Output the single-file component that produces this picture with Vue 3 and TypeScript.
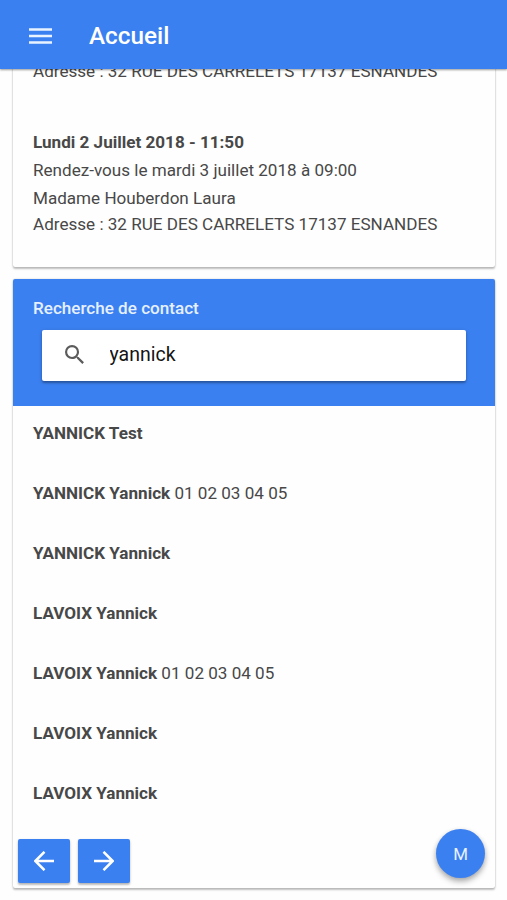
<script setup lang="ts">
interface Appointment {
  date?: string
  summary?: string
  person?: string
  address: string
}

interface Contact {
  name: string
  phone?: string
}

const appointments: Appointment[] = [
  { address: '32 RUE DES CARRELETS 17137 ESNANDES' },
  {
    date: 'Lundi 2 Juillet 2018 - 11:50',
    summary: 'Rendez-vous le mardi 3 juillet 2018 à 09:00',
    person: 'Madame Houberdon Laura',
    address: '32 RUE DES CARRELETS 17137 ESNANDES',
  },
]

const contacts: Contact[] = [
  { name: 'YANNICK Test' },
  { name: 'YANNICK Yannick', phone: '01 02 03 04 05' },
  { name: 'YANNICK Yannick' },
  { name: 'LAVOIX Yannick' },
  { name: 'LAVOIX Yannick', phone: '01 02 03 04 05' },
  { name: 'LAVOIX Yannick' },
  { name: 'LAVOIX Yannick' },
]
</script>

<template>
  <div class="page">
    <header class="toolbar">
      <svg class="menu" viewBox="0 0 23 16" aria-hidden="true">
        <path d="M0 1.4h23M0 8h23M0 14.6h23" />
      </svg>
      <h1>Accueil</h1>
    </header>

    <main class="content">
      <section class="card appointments">
        <article v-for="(item, index) in appointments" :key="index" class="appointment">
          <h2 v-if="item.date">{{ item.date }}</h2>
          <p v-if="item.summary">{{ item.summary }}</p>
          <p v-if="item.person">{{ item.person }}</p>
          <p class="address">Adresse : {{ item.address }}</p>
        </article>
      </section>

      <section class="card contacts">
        <div class="search-panel">
          <h2>Recherche de contact</h2>
          <label class="search">
            <svg viewBox="0 0 18 18" aria-hidden="true">
              <path d="M12.5 11h-.79l-.28-.27A6.47 6.47 0 0 0 13 6.5 6.5 6.5 0 1 0 6.5 13c1.61 0 3.09-.59 4.23-1.57l.27.28v.79l5 4.99L17.49 16l-4.99-5zm-6 0a4.5 4.5 0 1 1 0-9 4.5 4.5 0 0 1 0 9z" />
            </svg>
            <input type="text" value="yannick" />
          </label>
        </div>
        <ul>
          <li v-for="(contact, index) in contacts" :key="index">
            <strong>{{ contact.name }}</strong>{{ contact.phone ? ' ' + contact.phone : '' }}
          </li>
        </ul>
        <div class="pager">
          <button type="button" aria-label="Précédent">
            <svg viewBox="0 0 20 20"><path d="M20 10H1.5M10.5 .8L1.3 10l9.2 9.2" /></svg>
          </button>
          <button type="button" aria-label="Suivant">
            <svg viewBox="0 0 20 20"><path d="M0 10h18.5M9.5 .8l9.2 9.2-9.2 9.2" /></svg>
          </button>
        </div>
      </section>
    </main>

    <button class="fab" type="button">M</button>
  </div>
</template>

<style>
body {
  margin: 0;
  background: #fefefe;
}
</style>

<style scoped>
.page {
  position: relative;
  box-sizing: border-box;
  display: flex;
  flex-direction: column;
  height: 900px;
  overflow: hidden;
  font-family: Roboto, "Liberation Sans", sans-serif;
  font-size: 17.08px;
  color: #484848;
}

.toolbar {
  position: relative;
  z-index: 1;
  flex: none;
  display: flex;
  align-items: center;
  gap: 37px;
  box-sizing: border-box;
  height: 69px;
  padding: 3px 29px 0;
  background: #3b80f0;
  color: #fff;
  box-shadow: 0 1px 2px rgba(0, 0, 0, 0.4);
}

.menu {
  width: 23px;
  height: 16px;
  fill: none;
  stroke: #e9f2ff;
  stroke-width: 2.5;
}

h1 {
  margin: 0;
  font-size: 24.3px;
  font-weight: 500;
  line-height: 28px;
}

.content {
  flex: 1;
  min-height: 0;
  display: flex;
  flex-direction: column;
  justify-content: flex-end;
  gap: 12px;
  padding: 0 12px 12px 13px;
}

.card {
  flex: none;
  border-radius: 2px;
  background: #fefefe;
  box-shadow: 0 2px 2px rgba(0, 0, 0, 0.24), 0 0 2px rgba(0, 0, 0, 0.2);
}

.appointments {
  padding: 0 20px 30px;
}

.appointment + .appointment {
  margin-top: 44px;
}

.appointment h2,
.appointment p {
  margin: 0;
  font-size: inherit;
  line-height: 28px;
  white-space: nowrap;
}

.appointment h2 {
  font-weight: 700;
}

.appointment .address {
  line-height: 25px;
}

.search-panel {
  box-sizing: border-box;
  height: 127px;
  padding: 19px 29px 0;
  border-radius: 2px 2px 0 0;
  background: #3b80f0;
}

.search-panel h2 {
  margin: 0 0 11.5px -9px;
  font-size: 17.08px;
  font-weight: 500;
  line-height: 20px;
  color: #e6f0ff;
}

.search {
  display: flex;
  align-items: center;
  gap: 25.5px;
  box-sizing: border-box;
  height: 51px;
  padding: 0 22.5px;
  border-radius: 2px;
  background: #fff;
  box-shadow: 0 2px 2px rgba(0, 0, 0, 0.26), 0 1px 4px rgba(0, 0, 0, 0.16);
}

.search svg {
  flex: none;
  width: 19.5px;
  height: 19.5px;
  fill: #5b5b5b;
}

.search input {
  flex: 1;
  min-width: 0;
  padding: 0;
  border: 0;
  outline: 0;
  background: transparent;
  font: 400 19.5px/26px Roboto, "Liberation Sans", sans-serif;
  color: #141414;
}

ul {
  margin: 0;
  padding: 0 20px;
  list-style: none;
}

li {
  height: 60px;
  line-height: 55px;
  white-space: nowrap;
}

.pager {
  display: flex;
  gap: 8px;
  padding: 13px 5px 5px;
}

.pager button {
  display: flex;
  align-items: center;
  justify-content: center;
  width: 52px;
  height: 44px;
  padding: 0;
  border: 0;
  border-radius: 2px;
  background: #3b80f0;
  box-shadow: 0 2px 2px rgba(0, 0, 0, 0.2), 0 1px 3px rgba(0, 0, 0, 0.14);
}

.pager svg {
  width: 20px;
  height: 20px;
  fill: none;
  stroke: #fff;
  stroke-width: 2.5;
}

.fab {
  position: absolute;
  right: 22px;
  bottom: 22px;
  width: 49px;
  height: 49px;
  padding: 1px 0 0;
  border: 0;
  border-radius: 50%;
  background: #3b80f0;
  box-shadow: 0 4px 6px rgba(0, 0, 0, 0.2), 0 2px 5px rgba(0, 0, 0, 0.2);
  font: 400 16.9px/48px Roboto, "Liberation Sans", sans-serif;
  color: #e9f2ff;
}
</style>
